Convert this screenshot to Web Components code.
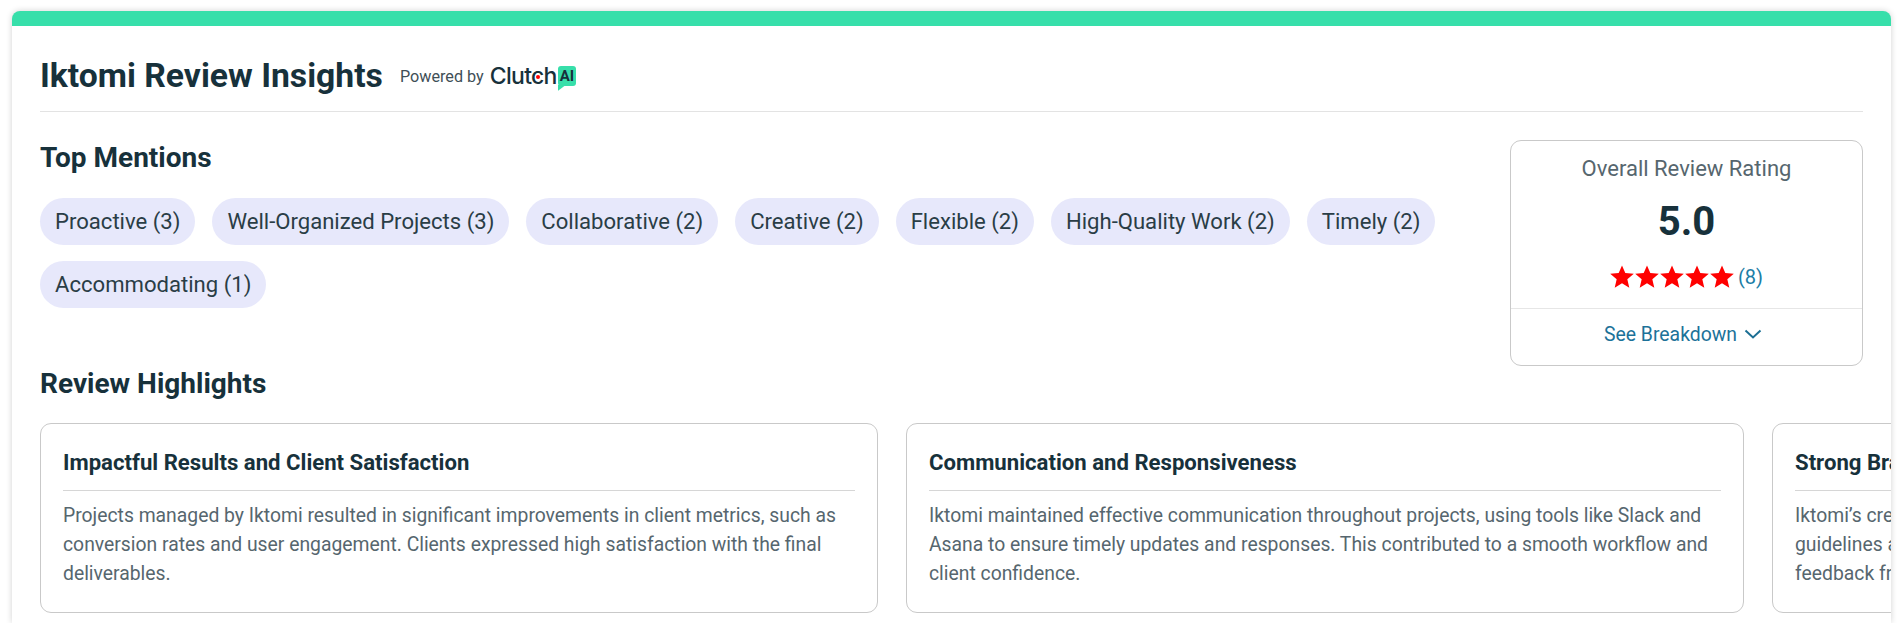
<!DOCTYPE html>
<html lang="en">
<head>
<meta charset="utf-8">
<title>Iktomi Review Insights</title>
<style>
  html, body { margin: 0; height: 100%; overflow: hidden; background: #fff; }
  body { font-family: Roboto, "Liberation Sans", sans-serif; color: #17313b; }
</style>
</head>
<body>
<review-insights></review-insights>

<template id="insights-tpl">
  <style>
    :host { display: block; box-sizing: border-box; height: 100vh; padding: 11px 12px 0; }
    .panel {
      box-sizing: border-box;
      height: 100%;
      border-top: 15px solid #37dfaa;
      border-radius: 8px 8px 0 0;
      background: #fff;
      box-shadow: 0 0 6px rgba(0, 0, 0, .18);
      padding: 0 28px;
      overflow: hidden;
    }
    header {
      display: flex;
      align-items: center;
      gap: 17px;
      box-sizing: border-box;
      height: 86px;
      padding-top: 14px;
      border-bottom: 1px solid #e3e3e3;
    }
    h1 { margin: 0; font-size: 33.7px; font-weight: 700; line-height: 40px; }
    .top { display: flex; justify-content: space-between; }
    .mentions { width: 1420px; }
    h2 { margin: 0; font-size: 28px; font-weight: 700; line-height: 32px; }
    .mentions h2 { margin-top: 30px; }
    .chips { display: flex; flex-wrap: wrap; gap: 16px 17px; margin-top: 24px; }
    .highlights-title { margin-top: 2px; }
    .cards { display: flex; gap: 28px; margin-top: 23px; width: 2800px; }
    rating-box { margin-top: 28px; }
  </style>
  <div class="panel">
    <header>
      <h1>Iktomi Review Insights</h1>
      <powered-by></powered-by>
    </header>
    <div class="top">
      <div class="mentions">
        <h2>Top Mentions</h2>
        <div class="chips">
          <mention-chip>Proactive (3)</mention-chip>
          <mention-chip>Well-Organized Projects (3)</mention-chip>
          <mention-chip>Collaborative (2)</mention-chip>
          <mention-chip>Creative (2)</mention-chip>
          <mention-chip>Flexible (2)</mention-chip>
          <mention-chip>High-Quality Work (2)</mention-chip>
          <mention-chip>Timely (2)</mention-chip>
          <mention-chip>Accommodating (1)</mention-chip>
        </div>
      </div>
      <rating-box></rating-box>
    </div>
    <h2 class="highlights-title">Review Highlights</h2>
    <div class="cards">
      <highlight-card title="Impactful Results and Client Satisfaction">Projects managed by Iktomi resulted in significant improvements in client metrics, such as conversion rates and user engagement. Clients expressed high satisfaction with the final deliverables.</highlight-card>
      <highlight-card title="Communication and Responsiveness">Iktomi maintained effective communication throughout projects, using tools like Slack and Asana to ensure timely updates and responses. This contributed to a smooth workflow and client confidence.</highlight-card>
      <highlight-card title="Strong Brand Understanding">Iktomi’s creative team showed a strong understanding of each client’s brand and style guidelines and delivered consistent work across every single project, drawing on regular feedback from clients.</highlight-card>
    </div>
  </div>
</template>

<template id="powered-tpl">
  <style>
    :host { display: flex; align-items: center; gap: 6px; margin-top: 1px; }
    .by { font-size: 16.2px; color: #3f4f57; }
    .brand { position: relative; font-family: Inter, Roboto, sans-serif; font-size: 23px; font-weight: 500; letter-spacing: -.7px; color: #17313b; line-height: 28px; }
    .dot { position: absolute; left: 46px; top: 13px; width: 4px; height: 4px; border-radius: 50%; background: #f00; }
    .badge { position: relative; display: flex; margin-left: -5px; }
    .badge span {
      background: #37dfaa; color: #17313b; font-size: 15px; font-weight: 700;
      line-height: 20px; padding: 0 2px; border-radius: 3px;
    }
    .badge i {
      position: absolute; left: 0; top: 19px; width: 8px; height: 6px;
      background: #37dfaa; clip-path: polygon(0 0, 100% 0, 0 100%);
    }
  </style>
  <span class="by">Powered by</span>
  <span class="brand">Clutch<span class="dot"></span></span>
  <span class="badge"><span>AI</span><i></i></span>
</template>

<template id="chip-tpl">
  <style>
    :host {
      display: inline-flex; align-items: center; box-sizing: border-box;
      height: 47px; padding: 0 15px 2px; border-radius: 24px;
      background: #e7e8fb; color: #2a3d46; font-size: 22.1px;
    }
  </style>
  <slot></slot>
</template>

<template id="rating-tpl">
  <style>
    :host {
      display: block; box-sizing: border-box; width: 353px; height: 226px;
      border: 1px solid #c9c9c9; border-radius: 11px; text-align: center;
    }
    .label { margin-top: 14px; font-size: 22px; line-height: 28px; color: #56666e; }
    .score { margin-top: 16px; font-size: 40px; font-weight: 700; line-height: 46px; color: #17313b; }
    .stars { display: flex; justify-content: center; align-items: center; gap: 1px; margin-top: 19px; height: 26px; }
    .stars svg { width: 24px; height: 24px; fill: #f00; }
    .stars a { margin-left: 3px; font-size: 20px; color: #1c7ea6; }
    .more {
      display: flex; justify-content: center; align-items: center; gap: 7px;
      margin-top: 18px; height: 50px; padding-right: 7px; border-top: 1px solid #e6e6e6;
      font-size: 19.4px; color: #1c7299;
    }
    .more svg { width: 18px; height: 10px; fill: none; stroke: #1c6f94; stroke-width: 2; }
  </style>
  <div class="label">Overall Review Rating</div>
  <div class="score">5.0</div>
  <div class="stars">
    <svg viewBox="0 0 24 24"><path d="M12 .6l3.3 7.470 8.500.7-6.470 5.560 1.960 8.300L12 18.200l-7.290 4.430 1.960-8.300L.2 8.770l8.500-.7z"/></svg>
    <svg viewBox="0 0 24 24"><path d="M12 .6l3.3 7.470 8.500.7-6.470 5.560 1.960 8.300L12 18.200l-7.290 4.430 1.960-8.300L.2 8.770l8.500-.7z"/></svg>
    <svg viewBox="0 0 24 24"><path d="M12 .6l3.3 7.470 8.500.7-6.470 5.560 1.960 8.300L12 18.200l-7.290 4.430 1.960-8.300L.2 8.770l8.500-.7z"/></svg>
    <svg viewBox="0 0 24 24"><path d="M12 .6l3.3 7.470 8.500.7-6.470 5.560 1.960 8.300L12 18.200l-7.290 4.430 1.960-8.300L.2 8.770l8.500-.7z"/></svg>
    <svg viewBox="0 0 24 24"><path d="M12 .6l3.3 7.470 8.500.7-6.470 5.560 1.960 8.300L12 18.200l-7.290 4.430 1.960-8.300L.2 8.770l8.500-.7z"/></svg>
    <a>(8)</a>
  </div>
  <div class="more">See Breakdown
    <svg viewBox="0 0 18 10"><path d="M1.500 1.500L9 8.500l7.500-7"/></svg>
  </div>
</template>

<template id="card-tpl">
  <style>
    :host {
      display: block; box-sizing: border-box; flex: 0 0 838px; height: 190px;
      padding: 24px 22px 0; border: 1px solid #c9c9c9; border-radius: 11px;
    }
    h3 {
      margin: 0; padding-bottom: 14px; border-bottom: 1px solid #d6d6d6;
      font-size: 22.15px; font-weight: 700; line-height: 28px; color: #17313b;
    }
    p { margin: 10px 0 0; font-size: 19.33px; line-height: 29px; color: #56666e; }
  </style>
  <h3></h3>
  <p><slot></slot></p>
</template>

<script>
  // each element clones its template into an open shadow root
  class TemplatedElement extends HTMLElement {
    constructor(tplId) {
      super();
      this.attachShadow({ mode: 'open' });
      this.shadowRoot.appendChild(document.getElementById(tplId).content.cloneNode(true));
    }
  }

  class ReviewInsights extends TemplatedElement {
    constructor() { super('insights-tpl'); }
  }

  class PoweredBy extends TemplatedElement {
    constructor() { super('powered-tpl'); }
  }

  class MentionChip extends TemplatedElement {
    constructor() { super('chip-tpl'); }
  }

  class RatingBox extends TemplatedElement {
    constructor() { super('rating-tpl'); }
  }

  class HighlightCard extends TemplatedElement {
    constructor() { super('card-tpl'); }
    connectedCallback() {
      this.shadowRoot.querySelector('h3').textContent = this.getAttribute('title');
      this.removeAttribute('title');
    }
  }

  customElements.define('powered-by', PoweredBy);
  customElements.define('mention-chip', MentionChip);
  customElements.define('rating-box', RatingBox);
  customElements.define('highlight-card', HighlightCard);
  customElements.define('review-insights', ReviewInsights);
</script>
</body>
</html>
